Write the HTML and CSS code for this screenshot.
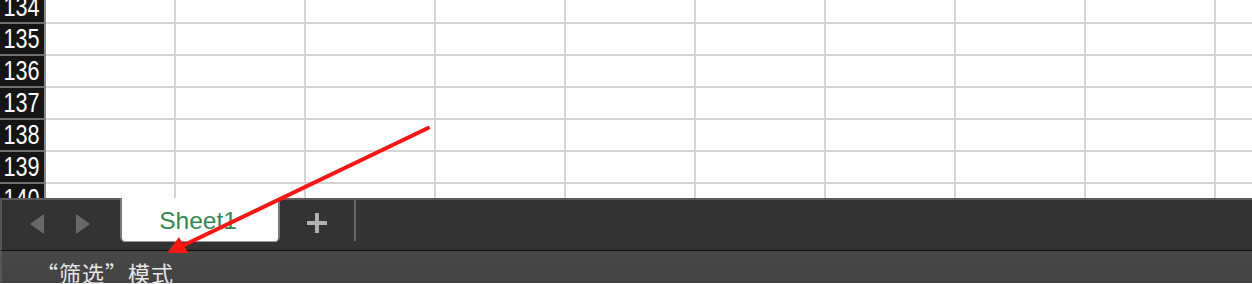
FILE: index.html
```html
<!DOCTYPE html>
<html lang="zh">
<head>
<meta charset="utf-8">
<title>Sheet</title>
<link rel="stylesheet" href="styles.css">
</head>
<body>
<div class="app">
  <div class="sheet">
    <div class="rows">
      <div class="row"><div class="rh"><span class="num">134</span></div><div class="c"></div><div class="c"></div><div class="c"></div><div class="c"></div><div class="c"></div><div class="c"></div><div class="c"></div><div class="c"></div><div class="c"></div><div class="c last"></div></div>
      <div class="row"><div class="rh"><span class="num">135</span></div><div class="c"></div><div class="c"></div><div class="c"></div><div class="c"></div><div class="c"></div><div class="c"></div><div class="c"></div><div class="c"></div><div class="c"></div><div class="c last"></div></div>
      <div class="row"><div class="rh"><span class="num">136</span></div><div class="c"></div><div class="c"></div><div class="c"></div><div class="c"></div><div class="c"></div><div class="c"></div><div class="c"></div><div class="c"></div><div class="c"></div><div class="c last"></div></div>
      <div class="row"><div class="rh"><span class="num">137</span></div><div class="c"></div><div class="c"></div><div class="c"></div><div class="c"></div><div class="c"></div><div class="c"></div><div class="c"></div><div class="c"></div><div class="c"></div><div class="c last"></div></div>
      <div class="row"><div class="rh"><span class="num">138</span></div><div class="c"></div><div class="c"></div><div class="c"></div><div class="c"></div><div class="c"></div><div class="c"></div><div class="c"></div><div class="c"></div><div class="c"></div><div class="c last"></div></div>
      <div class="row"><div class="rh"><span class="num">139</span></div><div class="c"></div><div class="c"></div><div class="c"></div><div class="c"></div><div class="c"></div><div class="c"></div><div class="c"></div><div class="c"></div><div class="c"></div><div class="c last"></div></div>
      <div class="row"><div class="rh"><span class="num">140</span></div><div class="c"></div><div class="c"></div><div class="c"></div><div class="c"></div><div class="c"></div><div class="c"></div><div class="c"></div><div class="c"></div><div class="c"></div><div class="c last"></div></div>
    </div>
  </div>
  <div class="tabbar">
    <div class="nav">
      <span class="tri tri-left"></span>
      <span class="tri tri-right"></span>
    </div>
    <div class="tab">Sheet1</div>
    <div class="add"><span class="plus"></span></div>
    <div class="sep"></div>
  </div>
  <div class="status">“筛选”模式</div>
  <svg class="annot" width="1252" height="284" viewBox="0 0 1252 284">
    <line x1="428" y1="128" x2="182" y2="246" stroke="#ff1414" stroke-width="4" stroke-linecap="round"/>
    <polygon points="167,253 188,253 179,237" fill="#ff1414"/>
  </svg>
</div>
</body>
</html>
```
FILE: styles.css
```css
html, body {
  margin: 0;
  padding: 0;
  width: 1252px;
  height: 284px;
  overflow: hidden;
  background: #ffffff;
}

.app {
  position: relative;
  width: 1252px;
  height: 284px;
  overflow: hidden;
}

.sheet {
  height: 198px;
  overflow: hidden;
  background: #ffffff;
}

.rows {
  margin-top: -8px;
}

.row {
  display: flex;
  height: 32px;
}

.rh {
  flex: 0 0 44px;
  height: 30px;
  background: #151515;
  border-right: 2px solid #8c8c8c;
  border-bottom: 2px solid #6e6e6e;
  display: flex;
  justify-content: center;
  overflow: hidden;
}

.num {
  display: inline-block;
  color: #ffffff;
  font-family: "Liberation Sans", Arial, sans-serif;
  font-size: 27px;
  line-height: 31px;
  transform: scaleX(0.8);
  transform-origin: center;
}

.c {
  flex: 0 0 128px;
  height: 30px;
  border-right: 2px solid #d4d4d4;
  border-bottom: 2px solid #d4d4d4;
}

.c.last {
  flex: 1 0 auto;
  border-right: none;
}

.tabbar {
  height: 50px;
  background: #333333;
  border-top: 2px solid #5a5a5a;
  border-left: 2px solid #555555;
  display: flex;
  align-items: flex-start;
}

.nav {
  width: 118px;
  height: 50px;
  display: flex;
  align-items: center;
  gap: 32px;
  padding-left: 28px;
  box-sizing: border-box;
}

.tri {
  width: 0;
  height: 0;
  border-top: 10px solid transparent;
  border-bottom: 10px solid transparent;
  margin-top: -2px;
}

.tri-left {
  border-right: 14px solid #696969;
}

.tri-right {
  border-left: 14px solid #696969;
}

.tab {
  width: 160px;
  height: 44px;
  margin-top: -2px;
  background: #ffffff;
  border-left: 2px solid #7a7a7a;
  border-right: 2px solid #7a7a7a;
  border-bottom: 1px solid #9a9a9a;
  border-radius: 0 0 5px 5px;
  box-sizing: border-box;
  color: #2f8a50;
  font-family: "Liberation Sans", Arial, sans-serif;
  font-size: 24.5px;
  line-height: 46px;
  text-align: center;
  padding-right: 4px;
}

.add {
  width: 74px;
  height: 46px;
  display: flex;
  align-items: center;
  justify-content: center;
}

.plus {
  position: relative;
  width: 20px;
  height: 4px;
  background: #b0b0b0;
}

.plus::after {
  content: "";
  position: absolute;
  left: 8px;
  top: -8px;
  width: 4px;
  height: 20px;
  background: #b0b0b0;
}

.sep {
  width: 2px;
  height: 41px;
  background: #666666;
}

.status {
  height: 33px;
  border-top: 1px solid #0e0e0e;
  border-left: 2px solid #575757;
  background: linear-gradient(#484848, #424242);
  box-sizing: border-box;
  color: #e6e6e6;
  font-family: "Noto Sans CJK SC", "Noto Sans", sans-serif;
  font-size: 22px;
  letter-spacing: 1px;
  line-height: 30px;
  padding-left: 34px;
  padding-top: 6px;
  white-space: nowrap;
}

.annot {
  position: absolute;
  left: 0;
  top: 0;
  pointer-events: none;
}
```
